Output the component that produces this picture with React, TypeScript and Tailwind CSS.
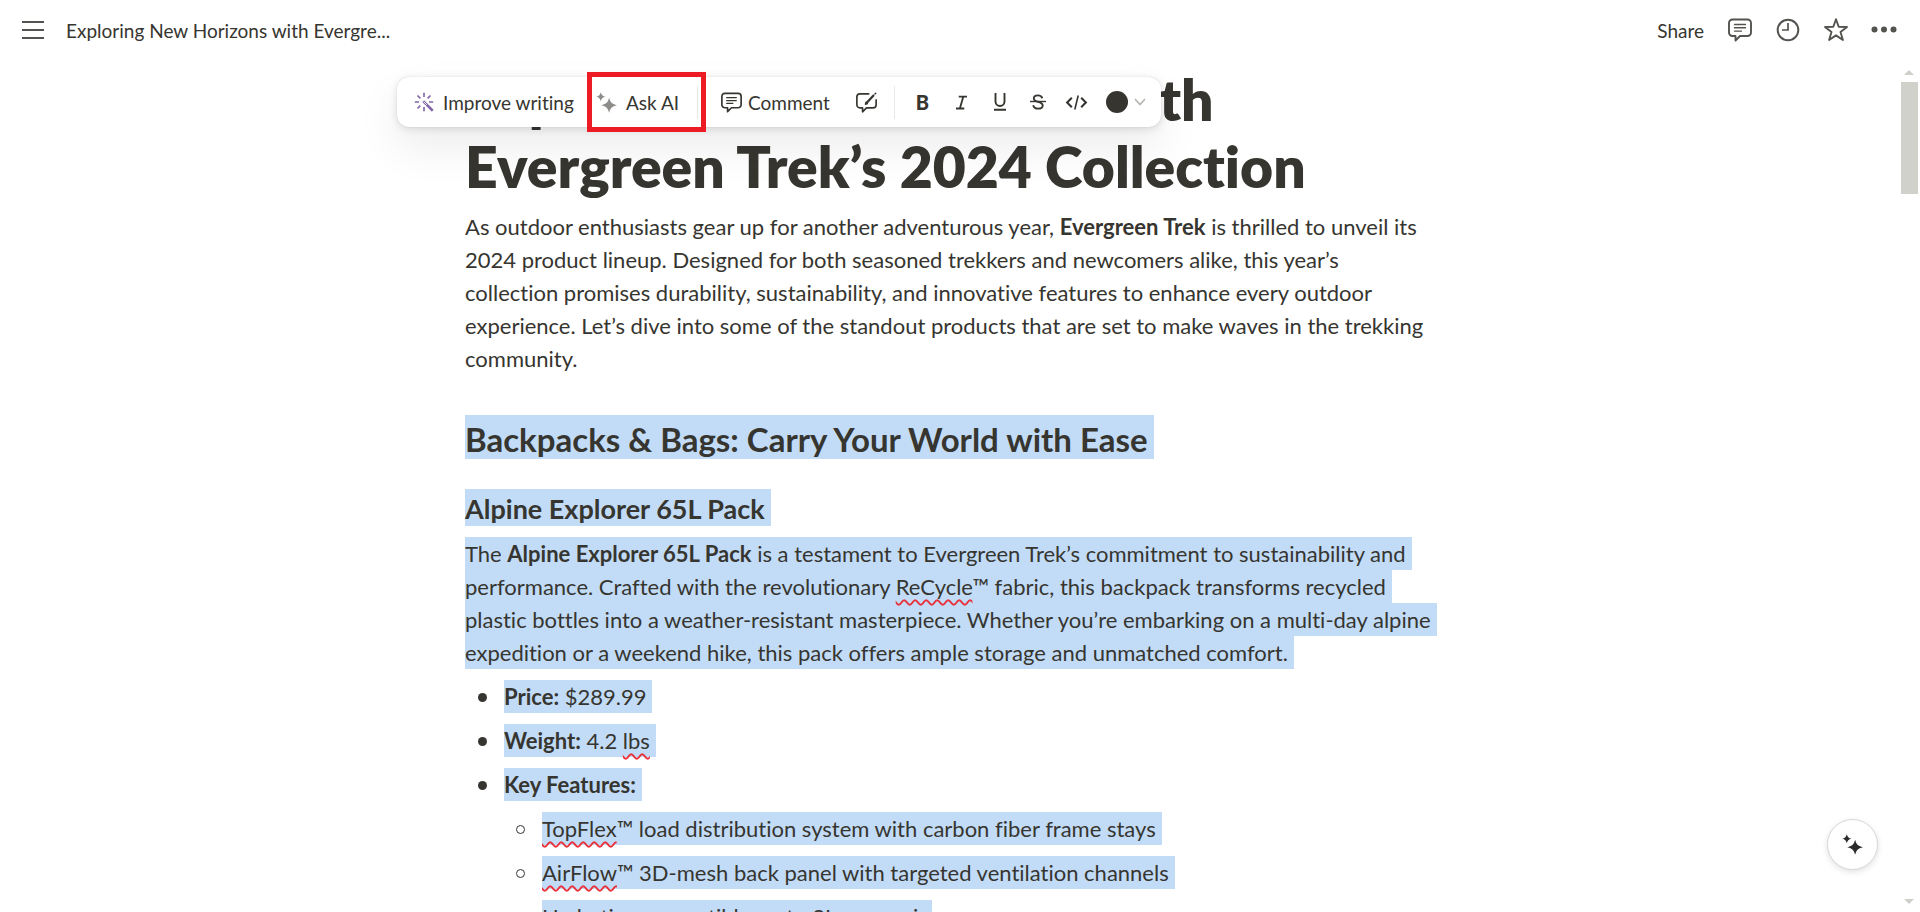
import type { ReactNode } from "react";

type IconProps = { className?: string };

function CommentIcon({ className }: IconProps) {
  return (
    <svg viewBox="0 0 24 24" className={className} fill="none" stroke="currentColor" strokeWidth="1.9" strokeLinejoin="round" strokeLinecap="round" aria-hidden="true">
      <path d="M4.5 1.5h15a3.5 3.5 0 0 1 3.5 3.5v9.5a3.5 3.5 0 0 1-3.5 3.5h-7.500l-4.500 4.500v-4.500h-3a3.500 3.500 0 0 1-3.500-3.500v-9.500a3.500 3.500 0 0 1 3.500-3.500z" />
      <path d="M6.500 6.500h11M6.500 9.800h11M6.500 13.100h7" strokeWidth="1.400" />
    </svg>
  );
}

function SuggestIcon({ className }: IconProps) {
  return (
    <svg viewBox="0 0 24 24" className={className} fill="none" stroke="currentColor" strokeWidth="1.900" strokeLinejoin="round" strokeLinecap="round" aria-hidden="true">
      <path d="M14.500 2.200H4.500A3.500 3.500 0 0 0 1 5.700v9a3.500 3.500 0 0 0 3.500 3.500h3v4.500l4.500-4.500h7.500a3.500 3.500 0 0 0 3.500-3.500V9" />
      <path d="M12 12.500 20.500 3.500" strokeWidth="2.600" strokeLinecap="butt" />
      <path d="m10.800 14 .600-2.400 1.700 1.600zM21.600 2.400l1-1" strokeWidth="1.600" />
    </svg>
  );
}

function SparklesIcon({ className }: IconProps) {
  return (
    <svg viewBox="0 0 24 24" className={className} fill="currentColor" aria-hidden="true">
      <path d="M15 6.500c1.500 5.200 3 7 9 8.500-6 1.500-7.500 3.300-9 8.700-1.500-5.400-3-7.200-9-8.700 6-1.500 7.500-3.300 9-8.500z" />
      <path d="M5.500.3c.9 3.200 1.900 4.400 5.300 5.200-3.400.8-4.400 2-5.300 5.200-.9-3.200-1.900-4.400-5.300-5.200 3.400-.8 4.400-2 5.300-5.200z" />
    </svg>
  );
}

function WandIcon({ className }: IconProps) {
  return (
    <svg viewBox="0 0 24 24" className={className} fill="none" stroke="currentColor" strokeWidth="2" aria-hidden="true">
      <path d="M12 1v5M12 18v5M1 12h5M18 12h5M4.200 4.200l3.400 3.400M19.800 4.200l-3.400 3.400M4.200 19.800l3.400-3.400" />
      <path d="m11 11 11.500 11.500" strokeWidth="3" />
      <path d="m11.500 11.500 4 4" stroke="white" strokeWidth="1" />
    </svg>
  );
}

function Squiggle({ children }: { children: ReactNode }) {
  return (
    <span className="underline decoration-[#e8323c] decoration-wavy decoration-[1.5px] underline-offset-4 [text-decoration-skip-ink:none]">
      {children}
    </span>
  );
}

function Selected({ children }: { children: ReactNode }) {
  return <span className="block w-fit whitespace-nowrap bg-[#c2dcf7] pr-1.5">{children}</span>;
}

function Line({ children }: { children: ReactNode }) {
  return <span className="block whitespace-nowrap">{children}</span>;
}

function B({ children }: { children: ReactNode }) {
  return <strong className="font-bold">{children}</strong>;
}

function Header() {
  return (
    <header className="flex h-16 shrink-0 items-center justify-between pr-6 pb-1 pl-[22px] text-[#54534f]">
      <div className="flex items-center gap-[22px]">
        <button type="button" aria-label="Menu">
          <svg viewBox="0 0 22 18" className="h-[18px] w-[22px]" stroke="currentColor" strokeWidth="2" aria-hidden="true">
            <path d="M0 1h22M0 9h22M0 17h22" />
          </svg>
        </button>
        <span className="pt-0.5 text-[19px] text-[#363530]">Exploring New Horizons with Evergre...</span>
      </div>
      <div className="flex items-center gap-6">
        <button type="button" className="pt-0.5 text-[19px] text-[#363530]">Share</button>
        <button type="button" aria-label="Comments">
          <CommentIcon className="size-6" />
        </button>
        <button type="button" aria-label="History">
          <svg viewBox="0 0 24 24" className="size-6" fill="none" stroke="currentColor" strokeWidth="2" aria-hidden="true">
            <circle cx="12" cy="12" r="10.300" />
            <path d="M12 5v7H6" strokeWidth="1.700" />
          </svg>
        </button>
        <button type="button" aria-label="Favorite">
          <svg viewBox="0 0 24 24" className="size-6" fill="none" stroke="currentColor" strokeWidth="1.900" strokeLinejoin="round" aria-hidden="true">
            <path d="m12 1.200 2.700 7.600 8.300.2-6.500 5 2.400 8L12 17.400l-6.900 4.600 2.400-8L1 9l8.300-.2z" />
          </svg>
        </button>
        <button type="button" aria-label="More">
          <svg viewBox="0 0 24 24" className="size-6 overflow-visible" fill="currentColor" aria-hidden="true">
            <circle cx="2.500" cy="11.500" r="3" />
            <circle cx="12" cy="11.500" r="3" />
            <circle cx="21.500" cy="11.500" r="3" />
          </svg>
        </button>
      </div>
    </header>
  );
}

function Toolbar() {
  return (
    <div
      role="toolbar"
      aria-label="Text formatting"
      className="absolute top-[13px] -left-[68px] flex h-[50px] w-[764px] items-center rounded-xl bg-white text-[19px] text-[#363530] shadow-[0_0_1px_rgba(0,0,0,0.2),0_2px_8px_rgba(0,0,0,0.12),0_20px_44px_rgba(0,0,0,0.08)]"
    >
      <button type="button" className="flex h-full w-[190px] items-center gap-[9px] pl-[17px] whitespace-nowrap">
        <WandIcon className="size-5 text-[#8266a8]" />
        Improve writing
      </button>
      <div className="-my-2 flex h-[60px] w-[119px] items-center justify-between border-5 border-[#ed1c24] pr-[3px] pl-1">
        <button type="button" className="flex items-center gap-[9px] whitespace-nowrap">
          <SparklesIcon className="size-[21px] text-[#8d8c89]" />
          Ask AI
        </button>
        <span className="h-[33px] w-px bg-[#e8e8e6]" />
      </div>
      <button type="button" className="flex h-full w-[138px] items-center gap-1.5 pl-[15px]">
        <CommentIcon className="size-[21px]" />
        Comment
      </button>
      <button type="button" aria-label="Suggest edit" className="flex h-full w-[50px] items-center pl-3">
        <SuggestIcon className="size-[21px]" />
      </button>
      <span className="h-[33px] w-px bg-[#e8e8e6]" />
      <div className="flex flex-1 items-center pl-2">
        <button type="button" aria-label="Bold" className="flex h-10 w-[39px] items-center justify-center text-xl font-black">B</button>
        <button type="button" aria-label="Italic" className="flex h-10 w-[38px] items-center justify-center">
          <svg viewBox="0 0 12 16" className="h-[15px] w-[11px]" fill="none" stroke="currentColor" strokeWidth="2" aria-hidden="true">
            <path d="M3 1.500h9M0 14.500h9M8 1.500 4.200 14.500" />
          </svg>
        </button>
        <button type="button" aria-label="Underline" className="flex h-10 w-[39px] items-center justify-center">
          <svg viewBox="0 0 14 18" className="h-[18px] w-3.5" fill="none" stroke="currentColor" strokeWidth="1.900" aria-hidden="true">
            <path d="M2.500 0v8.500a4.500 4.500 0 0 0 9 0V0M1 16.800h12" />
          </svg>
        </button>
        <button type="button" aria-label="Strikethrough" className="flex h-10 w-[38px] items-center justify-center">
          <svg viewBox="0 0 16 16" className="size-4" fill="none" stroke="currentColor" strokeWidth="1.900" aria-hidden="true">
            <path d="M12.300 4.300C11.700 2.200 10 1.400 8 1.400c-2.300 0-4.200 1-4.200 3 0 2.200 2.200 2.800 4.300 3.400 2.300.6 4.600 1.300 4.600 3.600 0 2.200-2.100 3.200-4.600 3.200-2.600 0-4.400-1.100-4.900-3.400" />
            <path d="M0 7.500h16" strokeWidth="1.400" />
          </svg>
        </button>
        <button type="button" aria-label="Code" className="flex h-10 w-[39px] items-center justify-center">
          <svg viewBox="0 0 24 16" className="h-[15px] w-[23px]" fill="none" stroke="currentColor" strokeWidth="2.200" aria-hidden="true">
            <path d="M7 3 2 8l5 5M17 3l5 5-5 5" />
            <path d="M13.800.5 10.200 15.500" strokeWidth="1.700" />
          </svg>
        </button>
        <button type="button" aria-label="Text color" className="flex h-10 items-center gap-1.5 pl-2.5">
          <span className="size-[22px] rounded-full bg-[#363530]" />
          <svg viewBox="0 0 12 8" className="h-2 w-3 text-[#b4b4b1]" fill="none" stroke="currentColor" strokeWidth="1.600" aria-hidden="true">
            <path d="m1 1 5 5.500L11 1" />
          </svg>
        </button>
      </div>
    </div>
  );
}

function Bullet({ children, hollow = false }: { children: ReactNode; hollow?: boolean }) {
  return (
    <li className="flex items-center">
      <span className="flex w-[39px] justify-center pt-0.5 pr-1">
        {hollow ? (
          <span className="size-[9px] rounded-full border border-[#363530]" />
        ) : (
          <span className="size-[9px] rounded-full bg-[#363530]" />
        )}
      </span>
      <Selected>{children}</Selected>
    </li>
  );
}

function Article() {
  return (
    <article className="relative mx-auto w-full max-w-[970px] pt-0.5 text-[22px] leading-[33px] text-[#363530]">
      <h1 className="text-[57px] leading-[67px] font-extrabold">
        <Line>Exploring New Horizons with</Line>
        <Line>Evergreen Trek’s 2024 Collection</Line>
      </h1>
      <p className="mt-2.5">
        <Line>As outdoor enthusiasts gear up for another adventurous year, <B>Evergreen Trek</B> is thrilled to unveil its</Line>
        <Line>2024 product lineup. Designed for both seasoned trekkers and newcomers alike, this year’s</Line>
        <Line>collection promises durability, sustainability, and innovative features to enhance every outdoor</Line>
        <Line>experience. Let’s dive into some of the standout products that are set to make waves in the trekking</Line>
        <Line>community.</Line>
      </p>
      <h2 className="mt-10 text-[33px] leading-10 font-bold [&>span]:pt-1">
        <Selected>Backpacks &amp; Bags: Carry Your World with Ease</Selected>
      </h2>
      <h3 className="mt-[30px] text-[27px] leading-[35px] font-bold [&>span]:pt-0.5">
        <Selected>Alpine Explorer 65L Pack</Selected>
      </h3>
      <p className="mt-[11px]">
        <Selected>The <B>Alpine Explorer 65L Pack</B> is a testament to Evergreen Trek’s commitment to sustainability and</Selected>
        <Selected>performance. Crafted with the revolutionary <Squiggle>ReCycle</Squiggle>™ fabric, this backpack transforms recycled</Selected>
        <Selected>plastic bottles into a weather-resistant masterpiece. Whether you’re embarking on a multi-day alpine</Selected>
        <Selected>expedition or a weekend hike, this pack offers ample storage and unmatched comfort.</Selected>
      </p>
      <ul className="mt-[11px] flex flex-col gap-[11px]">
        <Bullet><B>Price:</B> $289.99</Bullet>
        <Bullet><B>Weight:</B> 4.2 <Squiggle>lbs</Squiggle></Bullet>
        <li>
          <ul>
            <Bullet><B>Key Features:</B></Bullet>
          </ul>
          <ul className="mt-[11px] flex flex-col gap-[11px] pl-[38px]">
            <Bullet hollow><Squiggle>TopFlex</Squiggle>™ load distribution system with carbon fiber frame stays</Bullet>
            <Bullet hollow><Squiggle>AirFlow</Squiggle>™ 3D-mesh back panel with targeted ventilation channels</Bullet>
            <Bullet hollow>Hydration compatible up to 3L reservoir</Bullet>
          </ul>
        </li>
      </ul>
      <Toolbar />
    </article>
  );
}

export default function App() {
  return (
    <div className="relative flex h-screen flex-col overflow-hidden bg-white font-[Lato,'Noto_Sans',sans-serif] [font-variant-ligatures:none]">
      <Header />
      <div className="flex min-h-0 flex-1">
        <main className="h-full min-w-0 flex-1">
          <Article />
        </main>
        <div className="flex h-full w-5 flex-col items-center pt-1.5 pr-0.5 pb-2" aria-hidden="true">
          <svg viewBox="0 0 10 5" className="h-[5px] w-2.5 fill-[#cfcfca]"><path d="M0 5 5 0l5 5z" /></svg>
          <div className="mt-[7px] h-28 w-[17px] bg-[#d1d1cb]" />
          <svg viewBox="0 0 10 5" className="mt-auto h-[5px] w-2.5 fill-[#cfcfca]"><path d="M0 0h10L5 5z" /></svg>
        </div>
      </div>
      <button
        type="button"
        aria-label="AI assistant"
        className="absolute right-[42px] bottom-[42px] flex size-[51px] items-center justify-center rounded-full border border-[#d8d8d6] bg-white text-[#2b2b2b] shadow-[0_2px_6px_rgba(0,0,0,0.12)]"
      >
        <SparklesIcon className="size-[21px]" />
      </button>
    </div>
  );
}
